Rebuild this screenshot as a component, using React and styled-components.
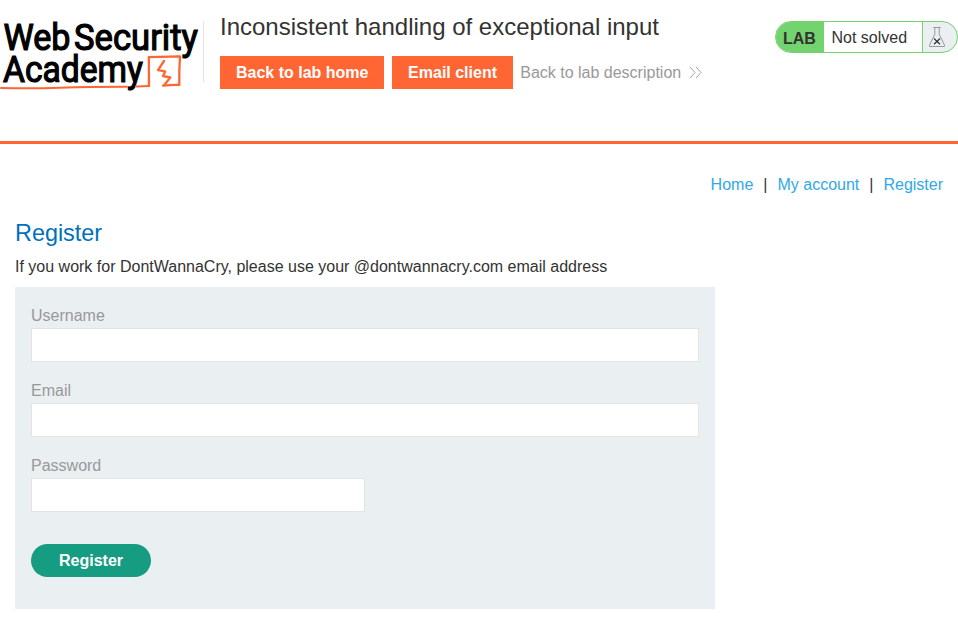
import React from 'react';
import styled, { createGlobalStyle } from 'styled-components';

const GlobalStyle = createGlobalStyle`
  * { box-sizing: border-box; }
  body {
    margin: 0;
    background: #fff;
    color: #333332;
    font-family: "Liberation Sans", Arial, sans-serif;
    font-size: 16px;
    line-height: 18px;
    overflow: hidden;
  }
`;

const Header = styled.header`
  display: flex;
  height: 144px;
  border-bottom: 3px solid #ff6633;
`;

const LogoLink = styled.a`
  flex: none;
  width: 204px;
  height: 61px;
  margin-top: 21px;
  border-right: 1px solid #e4e4e4;
`;

const LogoArt = styled.svg`
  display: block;
  overflow: visible;
  font-family: Roboto, sans-serif;
  font-weight: 400;
`;

const Intro = styled.div`
  flex: 1;
  padding: 13px 0 0 16px;
`;

const Title = styled.h2`
  margin: 0;
  font-size: 24px;
  font-weight: 400;
  line-height: 28px;
  white-space: nowrap;
`;

const Actions = styled.div`
  display: flex;
  align-items: center;
  margin-top: 15px;
`;

const ActionButton = styled.a`
  height: 33px;
  margin-right: 7.6px;
  padding: 0 16px;
  background: #ff6633;
  color: #fff;
  font-weight: 700;
  line-height: 33px;
`;

const DescriptionLink = styled.a`
  display: flex;
  align-items: center;
  gap: 8px;
  margin-left: -0.4px;
  color: #999;
`;

const Status = styled.div`
  display: flex;
  flex: none;
  width: 183px;
  height: 32px;
  margin-top: 21px;
  border: 1px solid #72d36f;
  border-radius: 16px;
  background: #ebeff2;
  overflow: hidden;
  line-height: 32px;
`;

const StatusLabel = styled.span`
  width: 48px;
  padding-left: 7px;
  background: #72d36f;
  font-weight: 700;
  line-height: 33px;
`;

const StatusText = styled.span`
  width: 99px;
  padding-left: 7.5px;
  border-right: 1px solid #72d36f;
  background: #fff;
  line-height: 31px;
`;

const StatusIcon = styled.svg`
  margin: 4px 0 0 5px;
`;

const Nav = styled.nav`
  display: flex;
  justify-content: flex-end;
  padding: 32px 15px 0;
`;

const NavLink = styled.a`
  color: #2fa9e8;
`;

const Divider = styled.span`
  margin: 0 10px;
`;

const Main = styled.main`
  padding: 25px 15px 0;
`;

const PageTitle = styled.h1`
  margin: 0;
  color: #0071bc;
  font-size: 23.4px;
  font-weight: 400;
  line-height: 28px;
`;

const Notice = styled.p`
  margin: 11px 0 11px;
`;

const Form = styled.form`
  width: 700px;
  height: 322px;
  padding: 20px 16px 0;
  background: #eaeff2;
`;

const Label = styled.label`
  display: block;
  color: #999;
`;

const Input = styled.input`
  display: block;
  width: ${(p) => (p.$half ? '334px' : '668px')};
  height: 34px;
  margin: 3px 0 20px;
  padding: 0 8px;
  border: 1px solid #e4e4e4;
  border-radius: 0;
  background: #fff;
  font: inherit;
  outline: none;
`;

const Submit = styled.button`
  display: block;
  width: 120px;
  height: 33px;
  margin-top: 32px;
  padding: 0;
  border: 0;
  border-radius: 17px;
  background: #169c80;
  color: #fff;
  font: 700 16px/33px "Liberation Sans", Arial, sans-serif;
`;

function Logo() {
  return (
    <LogoArt width="203" height="72" viewBox="0 21 203 72" aria-label="Web Security Academy">
      <g fill="#000" stroke="#000" strokeWidth="1.2">
        <text x="3.5" y="49.6" fontSize="36.5" textLength="67" lengthAdjust="spacingAndGlyphs">Web</text>
        <text x="74" y="49.6" fontSize="36.5" textLength="124" lengthAdjust="spacingAndGlyphs">Security</text>
        <text x="3" y="81.9" fontSize="36.5" textLength="140" lengthAdjust="spacingAndGlyphs">Academy</text>
      </g>
      <g fill="none" stroke="#ff6633" strokeLinejoin="round" strokeLinecap="round">
        <path d="M1 88 Q30 88.8 60 87.8 T127 86.8 M136 86.5 L149 86" strokeWidth="2" />
        <path d="M149 86 L148.8 57.2 Q164 56.8 180 56.3 Q179 70 179.3 84.9 Q172 84.6 163 85.6" strokeWidth="2.3" />
        <path d="M164 61 L158 70.2 L165.2 71.4 L163 76 L170.3 77.5 L164.5 84.8" strokeWidth="2.3" />
      </g>
    </LogoArt>
  );
}

function Chevrons() {
  return (
    <svg width="13" height="14" viewBox="0 0 13 14" fill="none" stroke="#999" strokeWidth="0.9">
      <path d="M1 1 L6 6.5 L1 12 M7 1 L12 6.5 L7 12" />
    </svg>
  );
}

function Flask() {
  return (
    <StatusIcon width="18" height="24" viewBox="0 0 18 24" fill="none">
      <path d="M5.2 1.5 H12.8 M6.8 1.5 V8.2 L1.5 19.2 V20.5 H16.5 V19.2 L11.2 8.2 V1.5" stroke="#999" />
      <path d="M6 12.5 L12 18.2 M12 12.5 L6 18.2" stroke="#333332" strokeWidth="1.2" />
    </StatusIcon>
  );
}

export default function App() {
  return (
    <>
      <GlobalStyle />
      <Header>
        <LogoLink><Logo /></LogoLink>
        <Intro>
          <Title>Inconsistent handling of exceptional input</Title>
          <Actions>
            <ActionButton>Back to lab home</ActionButton>
            <ActionButton>Email client</ActionButton>
            <DescriptionLink>Back to lab description <Chevrons /></DescriptionLink>
          </Actions>
        </Intro>
        <Status>
          <StatusLabel>LAB</StatusLabel>
          <StatusText>Not solved</StatusText>
          <Flask />
        </Status>
      </Header>
      <Nav>
        <NavLink>Home</NavLink>
        <Divider>|</Divider>
        <NavLink>My account</NavLink>
        <Divider>|</Divider>
        <NavLink>Register</NavLink>
      </Nav>
      <Main>
        <PageTitle>Register</PageTitle>
        <Notice>If you work for DontWannaCry, please use your @dontwannacry.com email address</Notice>
        <Form>
          <Label htmlFor="username">Username</Label>
          <Input id="username" />
          <Label htmlFor="email">Email</Label>
          <Input id="email" type="email" />
          <Label htmlFor="password">Password</Label>
          <Input id="password" type="password" $half />
          <Submit type="button">Register</Submit>
        </Form>
      </Main>
    </>
  );
}
